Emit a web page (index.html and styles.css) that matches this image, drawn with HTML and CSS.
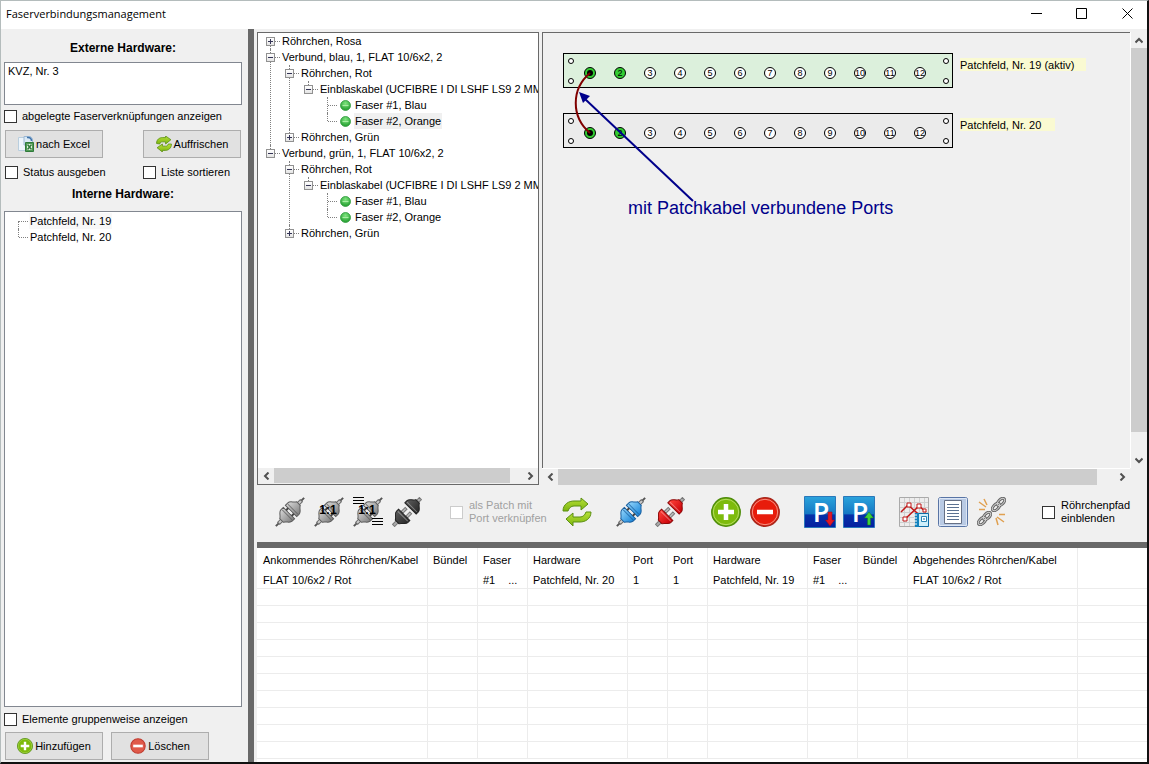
FILE: index.html
```html
<!DOCTYPE html>
<html lang="de">
<head>
<meta charset="utf-8">
<title>Faserverbindungsmanagement</title>
<link rel="stylesheet" href="styles.css">
</head>
<body>
<svg class="defs" aria-hidden="true">
  <defs>
    <linearGradient id="grey" x1="0" y1="0" x2="0" y2="1"><stop offset="0" stop-color="#d6d6d6"/><stop offset="1" stop-color="#808080"/></linearGradient>
    <linearGradient id="blue" x1="0" y1="0" x2="0" y2="1"><stop offset="0" stop-color="#8fd3fb"/><stop offset="1" stop-color="#1c86d8"/></linearGradient>
    <linearGradient id="red" x1="0" y1="0" x2="0" y2="1"><stop offset="0" stop-color="#ff4038"/><stop offset="1" stop-color="#c80008"/></linearGradient>
    <linearGradient id="dark" x1="0" y1="0" x2="0" y2="1"><stop offset="0" stop-color="#5a5a5a"/><stop offset="1" stop-color="#2a2a2a"/></linearGradient>
    <linearGradient id="leaf" x1="0" y1="0" x2="0" y2="1"><stop offset="0" stop-color="#b7e03a"/><stop offset="1" stop-color="#7cb50e"/></linearGradient>
    <linearGradient id="sky" x1="0" y1="0" x2="0" y2="1"><stop offset="0" stop-color="#2ba3dc"/><stop offset=".55" stop-color="#1579c4"/><stop offset=".6" stop-color="#0631a8"/><stop offset="1" stop-color="#0620a0"/></linearGradient>
    <radialGradient id="dot" cx=".5" cy=".3" r=".7"><stop offset="0" stop-color="#7fe57f"/><stop offset="1" stop-color="#1f9a2c"/></radialGradient>
    <symbol id="joined" viewBox="0 0 30 30">
      <g transform="translate(15 15) rotate(-45)" stroke-width="1">
        <path d="M-20 0H-15M15 0H20" stroke="#555" stroke-width="2"/>
        <path d="M-16-1.500H-11V1.500H-16ZM11-1.500H16V1.500H11Z" fill="#c9c9c9" stroke="#666"/>
        <path d="M-1.500-8V8H-5C-8 8-9 4-12 2.500V-2.500C-9-4-8-8-5-8Z"/>
        <path d="M1.500-8V8H5C8 8 9 4 12 2.500V-2.500C9-4 8-8 5-8Z"/>
        <path d="M-4-7V7M4-7V7" stroke-width="1" opacity=".7"/>
        <path d="M-1.500-4H1.500M-1.500 4H1.500" stroke="#444" stroke-width="2"/>
        <path d="M-1-2H1V2H-1Z" fill="#eee" stroke="none"/>
      </g>
    </symbol>
    <symbol id="split" viewBox="0 0 30 30">
      <g transform="translate(15 15) rotate(-45)" stroke-width="1">
        <path d="M-19-1.500H-12V1.500H-19ZM13-1.500H19V1.500H13Z" fill="#aaa" stroke="#777"/>
        <path d="M-4-4.500H2V-2H-4ZM-4 2H2V4.500H-4Z" fill="#bbb" stroke="#777"/>
        <path d="M-4-8V8H-7C-10 8-11 4-14 2.500V-2.500C-11-4-10-8-7-8Z"/>
        <path d="M5-8V8H8C11 8 12 4 15 2.500V-2.500C12-4 11-8 8-8Z"/>
        <path d="M-6-7V7M7-7V7" stroke="#fff" opacity=".35"/>
      </g>
    </symbol>
    <symbol id="refresh" viewBox="0 0 30 30">
      <path d="M1 14C1 7 7 4 12 4H19V1L26 7L19 13V9H12C9 9 7 11 6 14Z" fill="url(#leaf)" stroke="#5b8f12" stroke-linejoin="round"/>
      <path d="M29 15C29 22 23 25 18 25H11V29L4 22L11 16V20H18C21 20 23 18 24 15Z" fill="url(#leaf)" stroke="#5b8f12" stroke-linejoin="round"/>
    </symbol>
    <symbol id="refresh-small" viewBox="0 0 30 30">
      <path d="M1 14C1 6 7 3 12 3H18V0L28 7L18 15V11H12C9 11 8 12 7 15Z" fill="url(#leaf)" stroke="#5b8f12" stroke-width="1.500" stroke-linejoin="round"/>
      <path d="M29 15C29 23 23 27 18 27H12V30L2 22L12 15V19H18C21 19 22 18 23 15Z" fill="url(#leaf)" stroke="#5b8f12" stroke-width="1.500" stroke-linejoin="round"/>
    </symbol>
    <symbol id="plus" viewBox="0 0 30 30">
      <circle cx="15" cy="15" r="14.200" fill="#7dbb0c" stroke="#4f8d0c" stroke-width="1.500"/>
      <circle cx="15" cy="15" r="12.700" fill="none" stroke="#b5dc62"/>
      <path d="M7 15H23M15 7V23" stroke="#fff" stroke-width="4.500"/>
    </symbol>
    <symbol id="minus" viewBox="0 0 30 30">
      <circle cx="15" cy="15" r="14.200" fill="#e81c0c" stroke="#a8281c" stroke-width="1.500"/>
      <circle cx="15" cy="15" r="12.700" fill="none" stroke="#f59384"/>
      <path d="M7 15H23" stroke="#fff" stroke-width="4.500"/>
    </symbol>
    <symbol id="minus-soft" viewBox="0 0 30 30">
      <circle cx="15" cy="15" r="13.500" fill="#e05a4a" stroke="#c03a2e" stroke-width="2"/>
      <path d="M6 15H24" stroke="#fff" stroke-width="5"/>
    </symbol>
    <symbol id="led" viewBox="0 0 11 11">
      <circle cx="5.500" cy="5.500" r="5" fill="url(#dot)" stroke="#2f9a3c" stroke-width=".8"/>
      <path d="M2.500 5.500H8.500" stroke="#a9eda4" stroke-width="1.200"/>
    </symbol>
    <symbol id="links" viewBox="0 0 15 15">
      <g fill="none" stroke="#666" stroke-width="3">
        <ellipse cx="5" cy="10" rx="4.500" ry="2.500" transform="rotate(-45 5 10)"/>
        <ellipse cx="10" cy="5" rx="4.500" ry="2.500" transform="rotate(-45 10 5)"/>
      </g>
      <g fill="none" stroke="#d0d0d0" stroke-width="1">
        <ellipse cx="5" cy="10" rx="4.500" ry="2.500" transform="rotate(-45 5 10)"/>
        <ellipse cx="10" cy="5" rx="4.500" ry="2.500" transform="rotate(-45 10 5)"/>
      </g>
    </symbol>
  </defs>
</svg>

<div class="window">
  <header class="titlebar">
    <h1>Faserverbindungsmanagement</h1>
    <div class="caption">
      <button aria-label="Minimieren"><svg width="11" height="11"><path d="M0 5.500H11" stroke="#000"/></svg></button>
      <button aria-label="Maximieren"><svg width="11" height="11"><path d="M.5.5H10.500V10.500H.5Z" fill="none" stroke="#000"/></svg></button>
      <button aria-label="Schließen"><svg width="11" height="11"><path d="M.5.5L10.500 10.500M10.500.5L.5 10.500" stroke="#000"/></svg></button>
    </div>
  </header>

  <div class="body">
    <aside class="side">
      <h2>Externe Hardware:</h2>
      <textarea class="external" aria-label="Externe Hardware">KVZ, Nr. 3</textarea>
      <label class="check"><input type="checkbox">abgelegte Faserverknüpfungen anzeigen</label>
      <div class="pair">
        <button class="btn">
          <svg width="16" height="16" viewBox="0 0 16 16"><path d="M.5 1.500H8.500V14.500H.5Z" fill="#eef5fb" stroke="#b9cede"/><path d="M6 .5H12.500L14.500 3V9H6Z" fill="#dbe9f5" stroke="#9cb8d4"/><path d="M9 1.500C12 1 13.500 2.500 13.500 5" fill="none" stroke="#3f73ab" stroke-width="1.500"/><path d="M7.500 6.500H15.500V15.500H7.500Z" fill="#4f9a54" stroke="#2f7a3a"/><path d="M9 8H14V14H9Z" fill="#e9f6e6"/><path d="M9.500 8.500L13.500 13.500M13.500 8.500L9.500 13.500" stroke="#2f7a3a" stroke-width="1.500"/></svg>nach Excel</button>
        <button class="btn"><svg width="16" height="16"><use href="#refresh-small"/></svg>Auffrischen</button>
      </div>
      <div class="pair checks">
        <label class="check"><input type="checkbox">Status ausgeben</label>
        <label class="check"><input type="checkbox">Liste sortieren</label>
      </div>
      <h2 class="second">Interne Hardware:</h2>
      <div class="internal">
        <ul class="tree plain">
          <li><div class="row leaf"><span class="marked">Patchfeld, Nr. 19</span></div></li>
          <li><div class="row leaf"><span>Patchfeld, Nr. 20</span></div></li>
        </ul>
      </div>
      <label class="check"><input type="checkbox">Elemente gruppenweise anzeigen</label>
      <div class="actions">
        <button class="btn"><svg width="16" height="16"><use href="#plus"/></svg>Hinzufügen</button>
        <button class="btn"><svg width="16" height="16"><use href="#minus-soft"/></svg>Löschen</button>
      </div>
    </aside>

    <main class="main">
      <div class="panes">
        <section class="treepane">
          <div class="treeview">
            <ul class="tree">
              <li><div class="row"><button class="exp plus" aria-label="Aufklappen"></button><span>Röhrchen, Rosa</span></div></li>
              <li><div class="row"><button class="exp" aria-label="Zuklappen"></button><span>Verbund, blau, 1, FLAT 10/6x2, 2</span></div>
                <ul>
                  <li><div class="row"><button class="exp" aria-label="Zuklappen"></button><span>Röhrchen, Rot</span></div>
                    <ul>
                      <li><div class="row"><button class="exp" aria-label="Zuklappen"></button><span>Einblaskabel (UCFIBRE I DI LSHF LS9 2 MM5</span></div>
                        <ul>
                          <li><div class="row leaf"><svg width="11" height="11"><use href="#led"/></svg><span>Faser #1, Blau</span></div></li>
                          <li><div class="row leaf"><svg width="11" height="11"><use href="#led"/></svg><span class="selected">Faser #2, Orange</span></div></li>
                        </ul>
                      </li>
                    </ul>
                  </li>
                  <li><div class="row"><button class="exp plus" aria-label="Aufklappen"></button><span>Röhrchen, Grün</span></div></li>
                </ul>
              </li>
              <li><div class="row"><button class="exp" aria-label="Zuklappen"></button><span>Verbund, grün, 1, FLAT 10/6x2, 2</span></div>
                <ul>
                  <li><div class="row"><button class="exp" aria-label="Zuklappen"></button><span>Röhrchen, Rot</span></div>
                    <ul>
                      <li><div class="row"><button class="exp" aria-label="Zuklappen"></button><span>Einblaskabel (UCFIBRE I DI LSHF LS9 2 MM5</span></div>
                        <ul>
                          <li><div class="row leaf"><svg width="11" height="11"><use href="#led"/></svg><span>Faser #1, Blau</span></div></li>
                          <li><div class="row leaf"><svg width="11" height="11"><use href="#led"/></svg><span>Faser #2, Orange</span></div></li>
                        </ul>
                      </li>
                    </ul>
                  </li>
                  <li><div class="row"><button class="exp plus" aria-label="Aufklappen"></button><span>Röhrchen, Grün</span></div></li>
                </ul>
              </li>
            </ul>
          </div>
          <div class="hbar">
            <button aria-label="Nach links"><svg width="7" height="8"><path d="M5.500.5L2 4L5.500 7.500"/></svg></button>
            <div class="track"><div class="thumb tree-thumb"></div></div>
            <button aria-label="Nach rechts"><svg width="7" height="8"><path d="M1.500.5L5 4L1.500 7.500"/></svg></button>
          </div>
        </section>

        <section class="canvaspane">
          <svg class="canvas" role="img" aria-label="Patchfelder">
            <g class="field active">
              <rect x="20.500" y="20.500" width="389" height="34"/>
              <g class="holes"><circle cx="28" cy="28" r="2.500"/><circle cx="28" cy="48" r="2.500"/><circle cx="403" cy="28" r="2.500"/><circle cx="403" cy="48" r="2.500"/></g>
              <g class="ports">
                <circle class="used" cx="47" cy="40" r="5.500"/><circle class="used" cx="77" cy="40" r="5.500"/><circle cx="107" cy="40" r="5.500"/><circle cx="137" cy="40" r="5.500"/><circle cx="167" cy="40" r="5.500"/><circle cx="197" cy="40" r="5.500"/><circle cx="227" cy="40" r="5.500"/><circle cx="257" cy="40" r="5.500"/><circle cx="287" cy="40" r="5.500"/><circle cx="317" cy="40" r="5.500"/><circle cx="347" cy="40" r="5.500"/><circle cx="377" cy="40" r="5.500"/>
              </g>
              <g class="nums"><text x="77" y="43">2</text><text x="107" y="43">3</text><text x="137" y="43">4</text><text x="167" y="43">5</text><text x="197" y="43">6</text><text x="227" y="43">7</text><text x="257" y="43">8</text><text x="287" y="43">9</text><text x="317" y="43">10</text><text x="347" y="43">11</text><text x="377" y="43">12</text></g>
            </g>
            <rect class="tag" x="417" y="25" width="126" height="13"/>
            <text x="417" y="36">Patchfeld, Nr. 19 (aktiv)</text>
            <g class="field">
              <rect x="20.500" y="80.500" width="389" height="34"/>
              <g class="holes"><circle cx="28" cy="88" r="2.500"/><circle cx="28" cy="108" r="2.500"/><circle cx="403" cy="88" r="2.500"/><circle cx="403" cy="108" r="2.500"/></g>
              <g class="ports">
                <circle class="used" cx="47" cy="100" r="5.500"/><circle class="used" cx="77" cy="100" r="5.500"/><circle cx="107" cy="100" r="5.500"/><circle cx="137" cy="100" r="5.500"/><circle cx="167" cy="100" r="5.500"/><circle cx="197" cy="100" r="5.500"/><circle cx="227" cy="100" r="5.500"/><circle cx="257" cy="100" r="5.500"/><circle cx="287" cy="100" r="5.500"/><circle cx="317" cy="100" r="5.500"/><circle cx="347" cy="100" r="5.500"/><circle cx="377" cy="100" r="5.500"/>
              </g>
              <g class="nums"><text x="77" y="103">2</text><text x="107" y="103">3</text><text x="137" y="103">4</text><text x="167" y="103">5</text><text x="197" y="103">6</text><text x="227" y="103">7</text><text x="257" y="103">8</text><text x="287" y="103">9</text><text x="317" y="103">10</text><text x="347" y="103">11</text><text x="377" y="103">12</text></g>
            </g>
            <rect class="tag" x="417" y="85" width="95" height="13"/>
            <text x="417" y="96">Patchfeld, Nr. 20</text>
            <circle cx="47" cy="40" r="3"/><circle cx="47" cy="100" r="3"/>
            <path class="cable" d="M47 40C28 56 28 84 47 100"/>
            <path class="pointer" d="M42 66L150 168"/>
            <path class="tip" d="M36 59L47 63L40 70Z"/>
            <text class="note" x="85" y="181">mit Patchkabel verbundene Ports</text>
          </svg>
          <div class="vbar">
            <button aria-label="Nach oben"><svg width="8" height="7"><path d="M.5 5.500L4 2L7.500 5.500"/></svg></button>
            <div class="track"><div class="thumb v-thumb"></div></div>
            <button aria-label="Nach unten"><svg width="8" height="7"><path d="M.5 1.500L4 5L7.500 1.500"/></svg></button>
          </div>
          <div class="hbar">
            <button aria-label="Nach links"><svg width="7" height="8"><path d="M5.500.5L2 4L5.500 7.500"/></svg></button>
            <div class="track"><div class="thumb canvas-thumb"></div></div>
            <button aria-label="Nach rechts"><svg width="7" height="8"><path d="M1.500.5L5 4L1.500 7.500"/></svg></button>
          </div>
        </section>
      </div>

      <div class="toolbar" role="toolbar">
        <div class="group">
          <button class="tool" aria-label="Verbinden"><svg width="30" height="30"><use href="#joined" fill="url(#grey)" stroke="#5c5c5c"/></svg></button>
          <button class="tool" aria-label="1:1 verbinden"><svg width="30" height="30"><use href="#joined" fill="url(#grey)" stroke="#5c5c5c"/><text class="ratio" x="14" y="17">1:1</text></svg></button>
          <button class="tool" aria-label="Liste 1:1 verbinden"><svg width="30" height="30"><use href="#joined" fill="url(#grey)" stroke="#5c5c5c"/><path d="M0 .5H11M0 3.500H11M0 6.500H11M19 21.500H30M19 24.500H30M19 27.500H30" stroke="#000"/><text class="ratio" x="14" y="17">1:1</text></svg></button>
          <button class="tool" aria-label="Trennen"><svg width="30" height="30"><use href="#split" fill="url(#dark)" stroke="#222"/></svg></button>
        </div>
        <label class="check two-line muted"><input type="checkbox" disabled><span>als Patch mit<br>Port verknüpfen</span></label>
        <button class="tool refresh" aria-label="Auffrischen"><svg width="30" height="30"><use href="#refresh"/></svg></button>
        <div class="group">
          <button class="tool" aria-label="Fasern verbinden"><svg width="30" height="30"><use href="#joined" fill="url(#blue)" stroke="#1b5f9e"/></svg></button>
          <button class="tool" aria-label="Fasern trennen"><svg width="30" height="30"><use href="#split" fill="url(#red)" stroke="#8c0a0a"/></svg></button>
        </div>
        <div class="group edit">
          <button class="tool" aria-label="Hinzufügen"><svg width="30" height="30"><use href="#plus"/></svg></button>
          <button class="tool" aria-label="Entfernen"><svg width="30" height="30"><use href="#minus"/></svg></button>
        </div>
        <div class="group wide">
          <button class="tool" aria-label="Parken"><svg width="32" height="32"><path d="M.5.5H31.500V31.500H.5Z" fill="url(#sky)" stroke="#2a78ba"/><text class="park" x="17" y="26">P</text><path d="M24 16H28V24H30.500L26 30L21.500 24H24Z" fill="#e01824" stroke="#a00818" stroke-width=".5"/></svg></button>
          <button class="tool" aria-label="Ausparken"><svg width="32" height="32"><path d="M.5.5H31.500V31.500H.5Z" fill="url(#sky)" stroke="#2a78ba"/><text class="park" x="17" y="26">P</text><path d="M24.500 29V22H21.500L26 16L30.500 22H27.500V29Z" fill="#3fd03a" stroke="#108018" stroke-width=".5"/></svg></button>
        </div>
        <div class="group">
          <button class="tool" aria-label="Auswertung"><svg width="30" height="30"><path d="M.5.5H29.500V29.500H.5Z" fill="#ededed" stroke="#aaa"/><path d="M5.500 1V29M10.500 1V29M15.500 1V29M20.500 1V29M25.500 1V29M1 5.500H29M1 10.500H29M1 15.500H29M1 20.500H29M1 25.500H29" stroke="#cfcfcf"/><path d="M2 15L9 8L25 22M6 22L20 9L27 15" fill="none" stroke="#c01818" stroke-width="1.500"/><path d="M8 6H12V10H8ZM18 7H22V11H18ZM4 20H8V24H4ZM24 12H27V15H24Z" fill="#fff" stroke="#c01818"/><path d="M17.500 16.500H29.500V29.500H17.500Z" fill="#cdeefa" stroke="#0d6ca6"/><path d="M16 16H20V30H16Z" fill="#1382bd"/><path d="M22.500 19.500H27.500V24.500H22.500Z" fill="#fff" stroke="#2784b5"/><path d="M24 22H26" stroke="#0d6ca6"/><path d="M15 18H18M15 21H18M15 24H18M15 27H18" stroke="#fff"/></svg></button>
          <button class="tool" aria-label="Liste"><svg width="30" height="30"><rect x=".5" y=".5" width="29" height="29" rx="2" fill="#b9cae4" stroke="#5874a5"/><path d="M1.500 1.500H28.500V28.500H1.500Z" fill="none" stroke="#dce6f5"/><path d="M6.500 3.500H23.500V26.500H6.500Z" fill="#fff" stroke="#667085"/><path d="M9 7.500H21M9 10.500H21M9 13.500H21M9 16.500H21M9 19.500H21M9 22.500H21" stroke="#5c7292"/></svg></button>
          <button class="tool" aria-label="Verknüpfung lösen"><svg width="30" height="30"><use href="#links" x="14" y="0" width="15" height="15"/><use href="#links" x="0" y="14" width="15" height="15"/><path d="M7 2L10 8M2 5L9 10M2 12.500H8M22 17.500H28M20 20L27 25M19 21L21 28" stroke="#e0a050" stroke-width="1.500"/></svg></button>
        </div>
        <label class="check two-line last"><input type="checkbox"><span>Röhrchenpfad<br>einblenden</span></label>
      </div>

      <div class="results">
        <table>
          <colgroup><col class="c171"><col class="c50"><col class="c50"><col class="c100"><col class="c40"><col class="c40"><col class="c100"><col class="c50"><col class="c50"><col class="c170"><col></colgroup>
          <thead><tr><th>Ankommendes Röhrchen/Kabel</th><th>Bündel</th><th>Faser</th><th>Hardware</th><th>Port</th><th>Port</th><th>Hardware</th><th>Faser</th><th>Bündel</th><th>Abgehendes Röhrchen/Kabel</th><th></th></tr></thead>
          <tbody>
            <tr><td>FLAT 10/6x2 / Rot</td><td></td><td><span class="fiber"><span>#1</span><span>...</span></span></td><td>Patchfeld, Nr. 20</td><td>1</td><td>1</td><td>Patchfeld, Nr. 19</td><td><span class="fiber"><span>#1</span><span>...</span></span></td><td></td><td>FLAT 10/6x2 / Rot</td><td></td></tr>
            <tr><td></td><td></td><td></td><td></td><td></td><td></td><td></td><td></td><td></td><td></td><td></td></tr>
            <tr><td></td><td></td><td></td><td></td><td></td><td></td><td></td><td></td><td></td><td></td><td></td></tr>
            <tr><td></td><td></td><td></td><td></td><td></td><td></td><td></td><td></td><td></td><td></td><td></td></tr>
            <tr><td></td><td></td><td></td><td></td><td></td><td></td><td></td><td></td><td></td><td></td><td></td></tr>
            <tr><td></td><td></td><td></td><td></td><td></td><td></td><td></td><td></td><td></td><td></td><td></td></tr>
            <tr><td></td><td></td><td></td><td></td><td></td><td></td><td></td><td></td><td></td><td></td><td></td></tr>
            <tr><td></td><td></td><td></td><td></td><td></td><td></td><td></td><td></td><td></td><td></td><td></td></tr>
            <tr><td></td><td></td><td></td><td></td><td></td><td></td><td></td><td></td><td></td><td></td><td></td></tr>
            <tr><td></td><td></td><td></td><td></td><td></td><td></td><td></td><td></td><td></td><td></td><td></td></tr>
            <tr><td></td><td></td><td></td><td></td><td></td><td></td><td></td><td></td><td></td><td></td><td></td></tr>
          </tbody>
        </table>
      </div>
    </main>
  </div>
</div>
</body>
</html>
```
FILE: styles.css
```css
* { box-sizing: border-box; }
body {
  margin: 0;
  background: #fff;
  color: #000;
  font: 11px/16px "Liberation Sans", Arial, sans-serif;
}
button { font: inherit; color: inherit; padding: 0; border: 0; background: none; }
svg { display: block; flex: none; }
ul { list-style: none; margin: 0; padding: 0; }
.defs { position: absolute; width: 0; height: 0; }

.window {
  display: flex;
  flex-direction: column;
  height: 100vh;
  border: 1px solid #b4bcbc;
  border-right: 2px solid #111;
  border-bottom: 2px solid #111;
}
.titlebar {
  display: flex;
  justify-content: space-between;
  flex: none;
  height: 28px;
  padding-left: 5px;
}
.titlebar h1 { margin: 0; font: 11px/25px "Open Sans", "Noto Sans", sans-serif; }
.caption { display: flex; }
.caption button { width: 45px; height: 24px; display: grid; place-items: center; }
.caption button:last-child { width: 40px; margin-left: 3px; }

.body { display: flex; flex: 1; min-height: 0; }

.side {
  display: flex;
  flex-direction: column;
  flex: none;
  width: 253px;
  padding: 11px 6px 2px 3px;
  background: #f0f0f0;
  border-right: 6px solid #696969;
}
.side h2 { margin: 0 0 6px; font: bold 12px/16px "Liberation Sans", Arial, sans-serif; text-align: center; }
.side .second { margin: 7px 0 9px; }
.external {
  display: block;
  width: 100%;
  height: 43px;
  margin: 0 0 4px;
  padding: 0 3px;
  border: 1px solid #828790;
  background: #fff;
  color: inherit;
  font: inherit;
  resize: none;
  overflow: hidden;
}
.check { display: flex; align-items: center; gap: 5px; height: 14px; white-space: nowrap; }
.check input {
  appearance: none;
  flex: none;
  width: 13px;
  height: 13px;
  margin: 0;
  border: 1px solid #333;
  background: #fff;
}
.pair { display: grid; grid-template-columns: 98px 98px; justify-content: space-between; padding: 0 1px; margin: 7px 0; }
.checks { margin: 0; }
.btn {
  display: flex;
  align-items: center;
  justify-content: center;
  gap: 2px;
  width: 98px;
  height: 28px;
  border: 1px solid #adadad;
  background: #e1e1e1;
}
.actions { display: flex; gap: 8px; padding-left: 1px; margin-top: 6px; }
.internal {
  flex: 1;
  min-height: 60px;
  margin-bottom: 5px;
  padding: 1px 0 0 9px;
  border: 1px solid #828790;
  background: #fff;
  overflow: hidden;
}

.tree ul { padding-left: 19px; }
.tree li { position: relative; }
.tree li::before {
  content: "";
  position: absolute;
  top: 0;
  bottom: 0;
  left: 4px;
  border-left: 1px dotted #808080;
}
.tree > li:first-child::before { top: 8px; }
.tree li:last-child::before { bottom: auto; height: 8px; }
.row { display: flex; align-items: center; height: 16px; white-space: nowrap; }
.row::before { content: ""; order: 1; flex: none; width: 5px; margin-right: 1px; border-top: 1px dotted #808080; }
.row > * { order: 2; flex: none; }
.row > span { padding: 0 1px; }
.row > .exp {
  position: relative;
  order: 0;
  width: 9px;
  height: 9px;
  border: 1px solid #919191;
  background: linear-gradient(#fff, #e4e4e4);
}
.exp::before, .exp.plus::after { content: ""; position: absolute; background: #335; }
.exp::before { left: 1px; top: 3px; width: 5px; height: 1px; }
.exp.plus::after { left: 3px; top: 1px; width: 1px; height: 5px; }
.leaf { padding-left: 5px; }
.leaf::before { width: 9px; margin-right: 3px; }
.leaf svg { margin-right: 3px; }
.plain .leaf::before { margin-right: 1px; }
.selected { background: #f0f0f0; }
.marked { background: #f8f8f8; }

.main { display: flex; flex-direction: column; flex: 1; min-width: 0; padding-left: 3px; background: #f0f0f0; }
.panes { display: grid; grid-template-columns: 282px 1fr; gap: 3px; flex: 1; min-height: 0; padding-top: 3px; }
.treepane { display: flex; flex-direction: column; min-width: 0; min-height: 0; border: 1px solid #696969; background: #fff; }
.treeview { flex: 1; min-height: 0; padding-left: 8px; overflow: hidden; }
.canvaspane { display: grid; grid-template: minmax(0, 1fr) 17px / minmax(0, 1fr) 17px; min-width: 0; min-height: 0; }
.canvas { width: 100%; height: 100%; border-top: 1px solid #696969; border-left: 1px solid #696969; overflow: hidden; }

.hbar, .vbar { display: flex; background: #f0f0f0; }
.hbar { height: 16px; }
.canvaspane .hbar { height: 17px; border-top: 1px solid #fff; }
.vbar { flex-direction: column; border-left: 1px solid #fff; }
.hbar button, .vbar button { display: grid; place-items: center; flex: none; width: 16px; height: 16px; }
.hbar path, .vbar path { fill: none; stroke: #505050; stroke-width: 2; }
.track { flex: 1; }
.thumb { background: #cdcdcd; }
.tree-thumb { width: 95%; height: 15px; }
.canvas-thumb { width: 97%; height: 16px; }
.v-thumb { height: 95%; }

.field rect { fill: #ebebeb; stroke: #000; }
.active rect { fill: #dcf0dc; }
.holes circle { fill: #fff; stroke: #000; }
.ports circle { fill: #fff; stroke: #000; }
.ports .used { fill: #32cd32; }
.nums { font-size: 9px; text-anchor: middle; }
.tag { fill: #fafad2; }
.cable { fill: none; stroke: #800000; stroke-width: 2; }
.pointer { stroke: #00008b; stroke-width: 2; }
.tip, .note { fill: #00008b; }
.note { font-size: 18px; }

.toolbar { display: flex; align-items: center; gap: 24px; flex: none; height: 57px; padding: 0 0 3px 18px; }
.tool svg { overflow: visible; }
.group { display: flex; gap: 9px; }
.edit { margin-left: 2px; }
.wide { gap: 7px; }
.two-line { height: 26px; gap: 6px; line-height: 13px; }
.muted { width: 95px; margin-left: 4px; color: #a0a0a0; }
.muted input { border-color: #ccc; }
.refresh { margin-left: -7px; }
.last { margin-left: 11px; }
.ratio { font: bold 12px "Liberation Sans", sans-serif; text-anchor: middle; }
.park { fill: #fff; font: 600 27px "Open Sans", sans-serif; text-anchor: middle; }

.results { flex: none; height: 220px; border-top: 6px solid #696969; background: #fff; overflow: hidden; }
table { width: 100%; border-collapse: separate; border-spacing: 0; table-layout: fixed; }
th, td { padding: 0 0 0 5px; border-right: 1px solid #ececec; text-align: left; font-weight: normal; white-space: nowrap; }
th:first-child, td:first-child { padding-left: 6px; }
th:last-child, td:last-child { border-right: 0; }
th { height: 24px; }
td { height: 17px; border-bottom: 1px solid #ececec; }
.c171 { width: 171px; }
.c170 { width: 170px; }
.c100 { width: 100px; }
.c50 { width: 50px; }
.c40 { width: 40px; }
.fiber { display: flex; gap: 13px; }
```
